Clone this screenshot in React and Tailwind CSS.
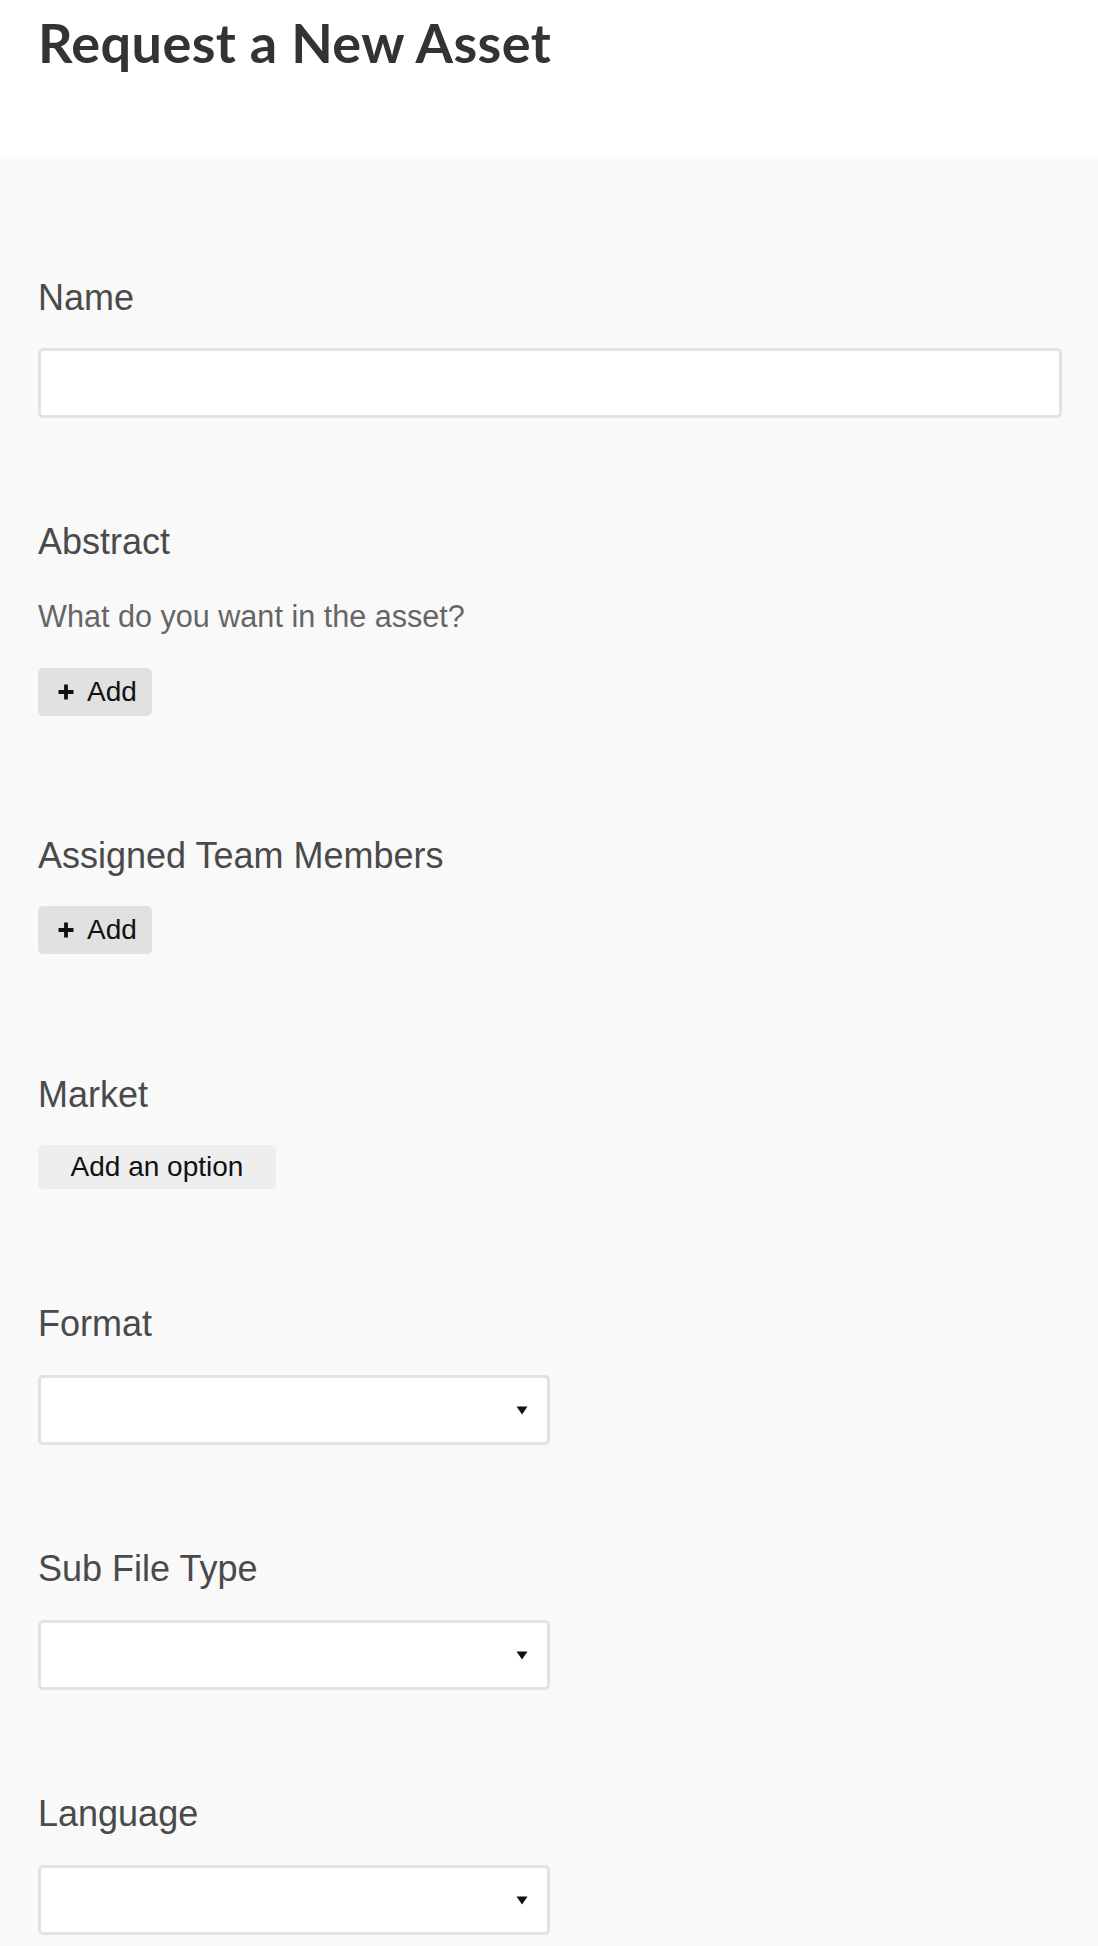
// App.jsx
const labelFont = { fontFamily: '"Liberation Sans", Arial, sans-serif' };

function Label({ children }) {
  return (
    <h3 className="text-[36px] leading-[44px] font-normal text-[#4a4a4a]" style={labelFont}>
      {children}
    </h3>
  );
}

function AddButton() {
  return (
    <button className="mt-[28px] flex items-center h-[48px] w-[114px] pl-[19px] rounded-[5px] bg-[#e1e1e1] text-[#111] text-[28px]">
      <svg width="18" height="18" viewBox="0 0 18 18" className="shrink-0">
        <path d="M9 1.5v15M1.5 9h15" stroke="#111" strokeWidth="3.8" />
      </svg>
      <span className="ml-[12px] leading-none">Add</span>
    </button>
  );
}

function SelectBox() {
  return (
    <div className="mt-[29px] flex items-center justify-end h-[70px] w-[512px] bg-white border-[3px] border-[#e2e2e2] rounded-[5px] pr-[19px]">
      <svg width="12" height="9" viewBox="0 0 12 9">
        <path d="M0.5 0.5h11L6 8.5z" fill="#111" />
      </svg>
    </div>
  );
}

export default function App() {
  return (
    <div className="min-h-[1946px] bg-[#f9f9f9]" style={labelFont}>
      {/* Header */}
      <div className="h-[157px] bg-white pl-[38px] pt-[11px]">
        <h1
          className="text-[54px] leading-[64px] font-bold text-[#333] tracking-[0.4px]"
          style={{ fontFamily: 'Lato, "Liberation Sans", sans-serif' }}
        >
          Request a New Asset
        </h1>
      </div>

      {/* Form */}
      <div className="flex flex-col items-start pl-[38px] pr-[36px] pt-[119px] pb-[9px]">
        <Label>Name</Label>
        <div className="mt-[28px] w-full h-[70px] bg-white border-[3px] border-[#e2e2e2] rounded-[5px]" />

        <div className="mt-[102px]">
          <Label>Abstract</Label>
        </div>
        <p className="mt-[34px] text-[30.6px] leading-[36px] text-[#666]">What do you want in the asset?</p>
        <div className="mt-[6px]">
          <AddButton />
        </div>

        <div className="mt-[118px]">
          <Label>Assigned Team Members</Label>
        </div>
        <AddButton />

        <div className="mt-[119px]">
          <Label>Market</Label>
        </div>
        <button className="mt-[28px] h-[44px] w-[238px] rounded-[5px] bg-[#eeeeee] text-[28px] leading-none text-[#111] text-center">
          Add an option
        </button>

        <div className="mt-[113px]">
          <Label>Format</Label>
        </div>
        <SelectBox />

        <div className="mt-[102px]">
          <Label>Sub File Type</Label>
        </div>
        <SelectBox />

        <div className="mt-[102px]">
          <Label>Language</Label>
        </div>
        <SelectBox />
      </div>
    </div>
  );
}
